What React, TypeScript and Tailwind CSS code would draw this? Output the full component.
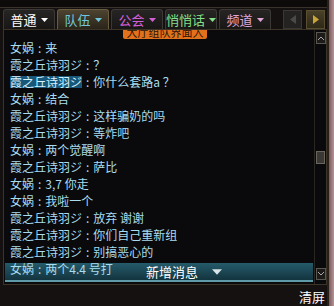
import React from "react";

type Line = { name: string; text: string; hl?: boolean };

const lines: Line[] = [
  { name: "女娲", text: "来" },
  { name: "霞之丘诗羽ジ", text: "？" },
  { name: "霞之丘诗羽ジ", text: "你什么套路a ？", hl: true },
  { name: "女娲", text: "结合" },
  { name: "霞之丘诗羽ジ", text: "这样骗奶的吗" },
  { name: "霞之丘诗羽ジ", text: "等炸吧" },
  { name: "女娲", text: "两个觉醒啊" },
  { name: "霞之丘诗羽ジ", text: "萨比" },
  { name: "女娲", text: "3,7 你走" },
  { name: "女娲", text: "我啦一个" },
  { name: "霞之丘诗羽ジ", text: "放弃 谢谢" },
  { name: "霞之丘诗羽ジ", text: "你们自己重新组" },
  { name: "霞之丘诗羽ジ", text: "别搞恶心的" },
  { name: "女娲", text: "两个4.4 号打" },
];

const tabs = [
  { label: "普通", color: "text-white", active: false },
  { label: "队伍", color: "text-[#6fc6dc]", active: true },
  { label: "公会", color: "text-[#d35fd8]", active: false },
  { label: "悄悄话", color: "text-[#86e08a]", active: false },
  { label: "频道", color: "text-[#e2a6d6]", active: false },
];

function Caret({ className }: { className?: string }) {
  return (
    <svg width="7" height="4" viewBox="0 0 7 4" className={className}>
      <path d="M0 0h7L3.5 4z" fill="currentColor" />
    </svg>
  );
}

export default function App() {
  return (
    <div
      className="flex h-[306px] w-[334px] overflow-hidden bg-[#141110] text-[12px] leading-none"
      style={{ fontFamily: '"Noto Sans CJK SC", "Noto Sans", sans-serif' }}
    >
      <div className="flex min-w-0 flex-1 flex-col">
        <div className="h-[8px] border-b border-[#3a332b] bg-[#0d0b09]" />
        <div className="flex h-[21px] items-end gap-[2px] pl-[3px] pt-[1px]">
          {tabs.map((t) => (
            <div
              key={t.label}
              className={`flex h-[20px] w-[52px] items-center justify-center gap-[4px] rounded-t-[3px] border border-b-0 ${
                t.active
                  ? "border-[#6a5c40] bg-gradient-to-b from-[#4d4330] to-[#2a251a]"
                  : "border-[#3b3835] bg-gradient-to-b from-[#262524] to-[#181716]"
              } ${t.color}`}
            >
              <span className="text-[13px]">{t.label}</span>
              <Caret />
            </div>
          ))}
          <div className="ml-[10px] flex gap-[4px] self-center">
            <div className="flex h-[19px] w-[19px] items-center justify-center border border-[#3a3835] bg-[#242322]">
              <svg width="6" height="9" viewBox="0 0 6 9">
                <path d="M6 0v9L0 4.5z" fill="#4a4a46" />
              </svg>
            </div>
            <div className="flex h-[19px] w-[19px] items-center justify-center border border-[#5a4e30] bg-gradient-to-b from-[#4a4128] to-[#2e2818]">
              <svg width="6" height="9" viewBox="0 0 6 9">
                <path d="M0 0v9L6 4.5z" fill="#c9a63a" />
              </svg>
            </div>
          </div>
        </div>
        <div className="relative ml-[3px] flex h-[256px] border border-[#3d3428] bg-[#0a0a0c]">
          <div className="absolute left-[119px] top-0 h-[9px] w-[84px] overflow-hidden rounded-b-[2px] bg-[#e2711c]">
            <div className="-mt-[4px] text-center text-[11px] leading-[12px] text-[#2a1608]">大厅组队界面入</div>
          </div>
          <div className="absolute bottom-[2px] left-[1px] right-[13px] h-[19px] border-b-2 border-[#5f9aa8] bg-gradient-to-b from-[#2b6f82]/80 to-[#163f4c]/80" />
          <div className="relative flex-1 pl-[6px] pt-[9px]">
            {lines.map((l, i) => (
              <div key={i} className="flex h-[17px] items-center whitespace-nowrap text-[#a9dcef]">
                <span className={l.hl ? "bg-[#17587a] text-[#d8f2ff]" : ""}>{l.name}</span>
                <span className="px-[4px]">:</span>
                <span>{l.text}</span>
              </div>
            ))}
          </div>
          <div className="absolute bottom-[4px] left-[1px] right-[13px] flex h-[17px] items-center justify-center gap-[14px] pl-[50px] text-[13px] text-white">
            <span>新增消息</span>
            <Caret className="h-[6px] w-[10px] text-[#d8e4e8]" />
          </div>
          <div className="relative flex w-[12px] flex-col items-center border-l border-[#2a2622] py-[2px]">
            <div className="flex h-[12px] w-[10px] items-center justify-center border border-[#5a5650] bg-[#1c1b1a]">
              <svg width="6" height="4" viewBox="0 0 6 4">
                <path d="M0 4l3-3 3 3" stroke="#aaa" fill="none" />
              </svg>
            </div>
            <div className="mt-[107px] h-[13px] w-[9px] border border-[#6a665e] bg-[#3a3835]" />
            <div className="flex-1" />
            <div className="mb-[2px] flex h-[12px] w-[10px] items-center justify-center border border-[#5a5650] bg-[#1c1b1a]">
              <svg width="6" height="4" viewBox="0 0 6 4">
                <path d="M0 0l3 3 3-3" stroke="#aaa" fill="none" />
              </svg>
            </div>
          </div>
        </div>
        <div className="flex flex-1 items-center justify-end pr-[2px] pt-[2px]">
          <span className="text-[13px] leading-[16px] text-white">清屏</span>
        </div>
      </div>
      <div className="w-[2px] bg-[#2a201a]" />
      <div className="w-[5px] bg-gradient-to-r from-[#7a5a5e] to-[#b89498]" />
    </div>
  );
}
